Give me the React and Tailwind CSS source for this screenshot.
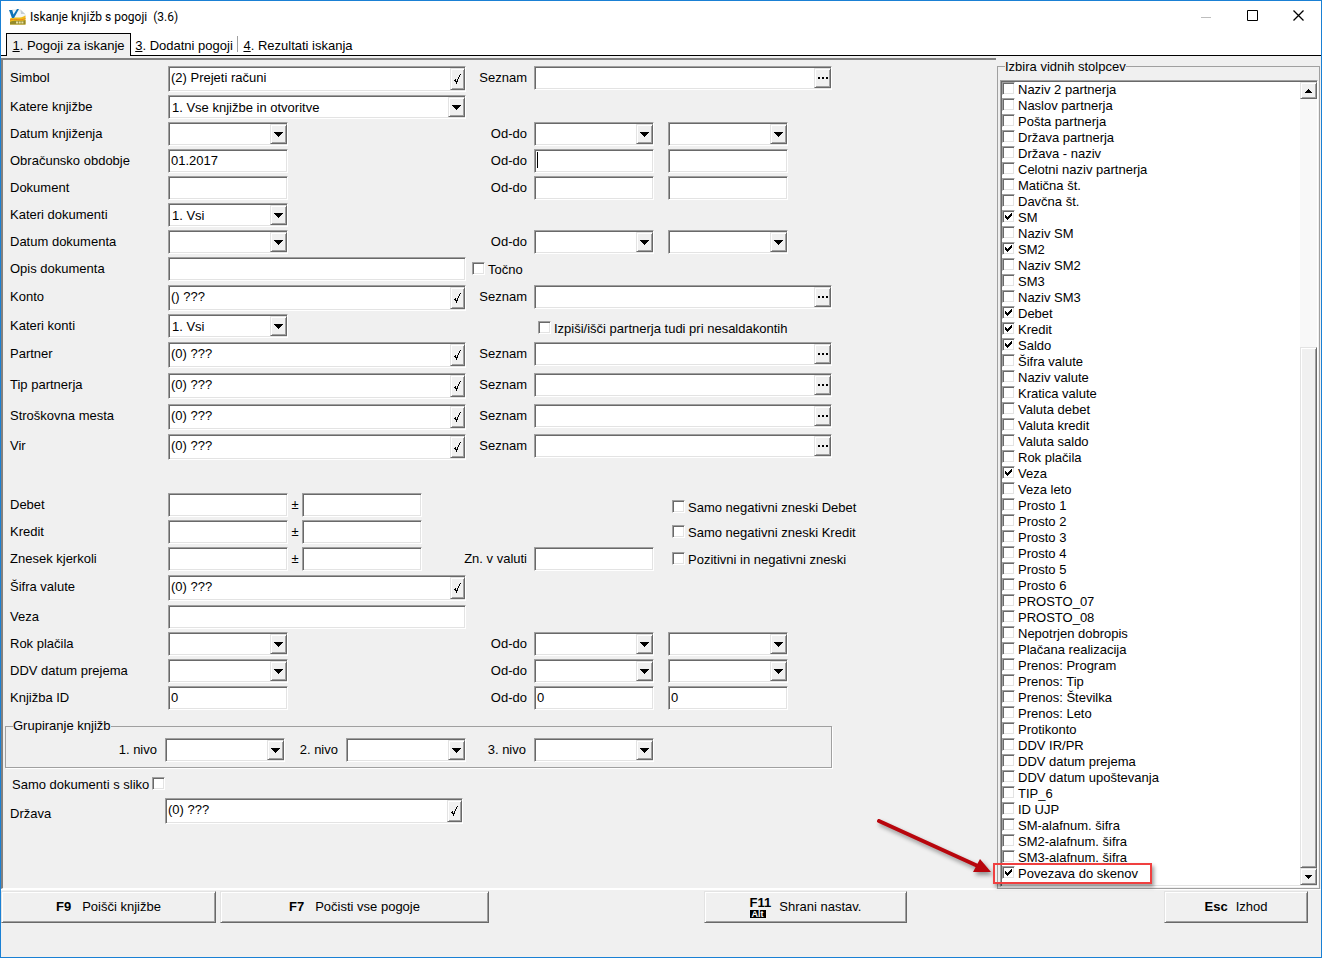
import { useState } from "react";

const bevelIn =
  "border border-t-[#a0a0a0] border-l-[#a0a0a0] border-b-white border-r-white shadow-[inset_1px_1px_0_#696969,inset_-1px_-1px_0_#e3e3e3]";
const bevelOut =
  "border border-t-[#e3e3e3] border-l-[#e3e3e3] border-b-[#696969] border-r-[#696969] bg-[#f0f0f0] shadow-[inset_1px_1px_0_#fff,inset_-1px_-1px_0_#a0a0a0]";

const columns = [
  "Naziv 2 partnerja",
  "Naslov partnerja",
  "Pošta partnerja",
  "Država partnerja",
  "Država - naziv",
  "Celotni naziv partnerja",
  "Matična št.",
  "Davčna št.",
  "SM",
  "Naziv SM",
  "SM2",
  "Naziv SM2",
  "SM3",
  "Naziv SM3",
  "Debet",
  "Kredit",
  "Saldo",
  "Šifra valute",
  "Naziv valute",
  "Kratica valute",
  "Valuta debet",
  "Valuta kredit",
  "Valuta saldo",
  "Rok plačila",
  "Veza",
  "Veza leto",
  "Prosto 1",
  "Prosto 2",
  "Prosto 3",
  "Prosto 4",
  "Prosto 5",
  "Prosto 6",
  "PROSTO_07",
  "PROSTO_08",
  "Nepotrjen dobropis",
  "Plačana realizacija",
  "Prenos: Program",
  "Prenos: Tip",
  "Prenos: Številka",
  "Prenos: Leto",
  "Protikonto",
  "DDV IR/PR",
  "DDV datum prejema",
  "DDV datum upoštevanja",
  "TIP_6",
  "ID UJP",
  "SM-alafnum. šifra",
  "SM2-alafnum. šifra",
  "SM3-alafnum. šifra",
  "Povezava do skenov",
];

const initiallyVisible = ["SM", "SM2", "Debet", "Kredit", "Saldo", "Veza", "Povezava do skenov"];

function Arrow() {
  return (
    <svg width="9" height="5" viewBox="0 0 9 5" shapeRendering="crispEdges">
      <path d="M0 0h9L4.5 5z" />
    </svg>
  );
}

function ScrollArrow({ up = false }) {
  return (
    <svg width="7" height="4" viewBox="0 0 7 4" shapeRendering="crispEdges">
      <path d={up ? "M0 4V3h1V2h1V1h1V0h1v1h1v1h1v1h1v1z" : "M0 0v1h1v1h1v1h1v1h1V3h1V2h1V1h1V0z"} />
    </svg>
  );
}

function TextField({ label, value = "", className = "w-[120px]", autoFocus = false }) {
  return (
    <div className={`${className} relative h-6 shrink-0`}>
      <input
        type="text"
        aria-label={label}
        defaultValue={value}
        autoFocus={autoFocus}
        className={`${bevelIn} block h-full w-full bg-white px-[2px] pb-[2px] outline-none ${autoFocus ? "caret-transparent" : ""}`}
      />
      {autoFocus && <span className="pointer-events-none absolute top-[3px] left-[3px] h-4 w-px bg-black" />}
    </div>
  );
}

function Combo({ label, value = "", className = "w-[120px]" }) {
  return (
    <div className={`${bevelIn} ${className} relative h-6 shrink-0 bg-white`}>
      <select
        aria-label={label}
        defaultValue={value}
        className="block h-full w-full appearance-none bg-transparent pt-px pl-[3px] outline-none"
      >
        <option>{value}</option>
      </select>
      <span
        className={`${bevelOut} pointer-events-none absolute top-px right-0 bottom-px flex w-[17px] items-center justify-center`}
      >
        <Arrow />
      </span>
    </div>
  );
}

function Lookup({ label, value }) {
  return (
    <div className={`${bevelIn} flex h-[26px] w-[298px] shrink-0 bg-white py-px pl-px`}>
      <input
        type="text"
        aria-label={label}
        defaultValue={value}
        className="min-w-0 flex-1 bg-transparent pb-[2px] pl-px outline-none"
      />
      <button
        type="button"
        aria-label={`${label} - izberi`}
        className={`${bevelOut} flex w-[15px] items-center justify-center`}
      >
        <svg width="7" height="10" viewBox="0 0 7 10" shapeRendering="crispEdges">
          <path d="M6 0h1v1H6zM5 1h1v2H5zM4 3h1v2H4zM3 5h1v3H3zM2 7h1v3H2zM1 5h1v3H1zM0 6h1v1H0z" />
        </svg>
      </button>
    </div>
  );
}

function ListField({ label }) {
  return (
    <div className={`${bevelIn} flex h-6 w-[298px] shrink-0 bg-white py-px pl-px`}>
      <input type="text" aria-label={label} className="min-w-0 flex-1 bg-transparent pl-px outline-none" />
      <button
        type="button"
        aria-label={`${label} - seznam`}
        className={`${bevelOut} flex w-[17px] items-center justify-center`}
      >
        <svg width="10" height="2" viewBox="0 0 10 2" shapeRendering="crispEdges">
          <path d="M0 0h2v2H0zM4 0h2v2H4zM8 0h2v2H8z" />
        </svg>
      </button>
    </div>
  );
}

function Check({ label, before = false, checked = false, onChange, className = "h-6" }) {
  const text = <span>{label}</span>;
  return (
    <label className={`flex items-center gap-[3px] whitespace-nowrap ${className}`}>
      {before && text}
      <span className="relative -mt-[3px] flex shrink-0">
        <input
          type="checkbox"
          {...(onChange ? { checked, onChange } : { defaultChecked: checked })}
          className={`${bevelIn} peer size-[13px] appearance-none bg-white`}
        />
        <svg
          className="pointer-events-none absolute inset-0 hidden peer-checked:block"
          width="13"
          height="13"
          viewBox="0 0 13 13"
          shapeRendering="crispEdges"
        >
          <path d="M3 5h1v1h1v1h1V6h1V5h1V4h1V3h1v3H9v1H8v1H7v1H6v1H5V9H4V8H3z" />
        </svg>
      </span>
      {!before && text}
    </label>
  );
}

function Row({ label, height = "h-[27px]", field, sideLabel, children }) {
  return (
    <div className={`grid grid-cols-[158px_298px_61px_1fr] ${height}`}>
      <span className="pt-1 whitespace-nowrap">{label}</span>
      <div className="flex">{field}</div>
      <span className="flex justify-end pt-1 whitespace-nowrap">{sideLabel}</span>
      <div className="flex gap-[14px] pl-[7px]">{children}</div>
    </div>
  );
}

function DateRange({ label }) {
  return (
    <>
      <Combo label={`${label} od`} />
      <Combo label={`${label} do`} />
    </>
  );
}

function TextRange({ label, value, autoFocus }) {
  return (
    <>
      <TextField label={`${label} od`} value={value} autoFocus={autoFocus} />
      <TextField label={`${label} do`} value={value} />
    </>
  );
}

function Tolerance({ label }) {
  return (
    <>
      <TextField label={label} />
      <span className="w-[14px] pt-1 text-center">±</span>
      <TextField label={`${label} ±`} />
    </>
  );
}

function AppLogo() {
  return (
    <svg width="17" height="16" viewBox="0 0 17 16">
      <path d="M3 1h9l4 4v6H3z" fill="#f3f6f8" stroke="#d5dce0" strokeWidth=".6" />
      <path d="M11.500 1L16 5h-4z" fill="#c5cdd2" />
      <path d="M1 9.500C6 7 10 10.500 16.500 6.500V15.500H1z" fill="#f0bd1c" />
      <path d="M1 11c5-2 9 1.500 15.500-1.500" fill="none" stroke="#e8791e" strokeWidth=".8" />
      <path d="M1 13c5-2.500 9 0 15.500-2v4.500H1z" fill="#938a2c" />
      <path d="M0 1h3.200l1.300 4.500L8 0h2L5 9H3z" fill="#1273b8" />
      <path d="M7 13.500h8" stroke="#e9e2a8" strokeWidth="2" strokeDasharray="2 .7" />
    </svg>
  );
}

function TitleBar() {
  return (
    <header className="flex h-8 items-center bg-white pl-2 font-[Roboto,sans-serif] text-[12px]">
      <AppLogo />
      <h1 className="ml-1 flex-1 whitespace-pre">Iskanje knjižb s pogoji  (3.6)</h1>
      <button type="button" aria-label="Pomanjšaj" className="flex w-[46px] justify-center">
        <svg width="10" height="10" viewBox="0 0 10 10" stroke="#bdbdbd">
          <path d="M0 5.500h10" />
        </svg>
      </button>
      <button type="button" aria-label="Povečaj" className="-mt-1 flex w-[46px] justify-center">
        <svg width="11" height="11" viewBox="0 0 11 11" fill="none" stroke="#000">
          <path d="M.5.5h10v10H.5z" />
        </svg>
      </button>
      <button type="button" aria-label="Zapri" className="-mt-1 flex w-[46px] justify-center">
        <svg width="11" height="11" viewBox="0 0 11 11" stroke="#000" strokeWidth="1.300">
          <path d="M.5.5l10 10M10.500.5l-10 10" />
        </svg>
      </button>
    </header>
  );
}

function Tabs() {
  return (
    <nav role="tablist" className="flex h-[23px] shrink-0 border-b border-black bg-white pl-[5px]">
      <button
        type="button"
        role="tab"
        aria-selected="true"
        className="-mb-px w-[125px] border border-b-0 border-black bg-[#f0f0f0] pt-px whitespace-nowrap"
      >
        <u>1</u>. Pogoji za iskanje
      </button>
      <button type="button" role="tab" aria-selected="false" className="w-[106px] pt-[3px] whitespace-nowrap">
        <u>3</u>. Dodatni pogoji
      </button>
      <span className="my-[3px] w-px bg-[#a0a0a0]" />
      <button type="button" role="tab" aria-selected="false" className="w-[120px] pt-[3px] whitespace-nowrap">
        <u>4</u>. Rezultati iskanja
      </button>
    </nav>
  );
}

function ConditionsForm() {
  return (
    <form className="min-w-0 flex-1 border-t-2 border-b border-l-2 border-[#808080] border-b-white pt-[6px] pl-[7px]">
      <Row
        label="Simbol"
        height="h-[29px]"
        field={<Lookup label="Simbol" value="(2) Prejeti računi" />}
        sideLabel="Seznam"
      >
        <ListField label="Simbol" />
      </Row>
      <Row
        label="Katere knjižbe"
        field={<Combo label="Katere knjižbe" value="1. Vse knjižbe in otvoritve" className="w-[298px]" />}
      />
      <Row label="Datum knjiženja" field={<Combo label="Datum knjiženja" />} sideLabel="Od-do">
        <DateRange label="Datum knjiženja" />
      </Row>
      <Row
        label="Obračunsko obdobje"
        field={<TextField label="Obračunsko obdobje" value="01.2017" />}
        sideLabel="Od-do"
      >
        <TextRange label="Obračunsko obdobje" autoFocus />
      </Row>
      <Row label="Dokument" field={<TextField label="Dokument" />} sideLabel="Od-do">
        <TextRange label="Dokument" />
      </Row>
      <Row label="Kateri dokumenti" field={<Combo label="Kateri dokumenti" value="1. Vsi" />} />
      <Row label="Datum dokumenta" field={<Combo label="Datum dokumenta" />} sideLabel="Od-do">
        <DateRange label="Datum dokumenta" />
      </Row>
      <div className="flex h-7">
        <span className="w-[158px] pt-1">Opis dokumenta</span>
        <TextField label="Opis dokumenta" className="w-[298px]" />
        <Check label="Točno" className="ml-[6px] h-[26px]" />
      </div>
      <Row label="Konto" height="h-[29px]" field={<Lookup label="Konto" value="() ???" />} sideLabel="Seznam">
        <ListField label="Konto" />
      </Row>
      <Row label="Kateri konti" height="h-7" field={<Combo label="Kateri konti" value="1. Vsi" />}>
        <Check label="Izpiši/išči partnerja tudi pri nesaldakontih" className="ml-1 h-[30px]" />
      </Row>
      <Row label="Partner" height="h-[31px]" field={<Lookup label="Partner" value="(0) ???" />} sideLabel="Seznam">
        <ListField label="Partner" />
      </Row>
      <Row
        label="Tip partnerja"
        height="h-[31px]"
        field={<Lookup label="Tip partnerja" value="(0) ???" />}
        sideLabel="Seznam"
      >
        <ListField label="Tip partnerja" />
      </Row>
      <Row
        label="Stroškovna mesta"
        height="h-[30px]"
        field={<Lookup label="Stroškovna mesta" value="(0) ???" />}
        sideLabel="Seznam"
      >
        <ListField label="Stroškovna mesta" />
      </Row>
      <Row label="Vir" height="h-[59px]" field={<Lookup label="Vir" value="(0) ???" />} sideLabel="Seznam">
        <ListField label="Vir" />
      </Row>

      <Row label="Debet" field={<Tolerance label="Debet" />}>
        <Check label="Samo negativni zneski Debet" className="ml-[138px] h-[30px]" />
      </Row>
      <Row label="Kredit" field={<Tolerance label="Kredit" />}>
        <Check label="Samo negativni zneski Kredit" className="ml-[138px] h-[26px]" />
      </Row>
      <Row label="Znesek kjerkoli" height="h-7" field={<Tolerance label="Znesek kjerkoli" />} sideLabel="Zn. v valuti">
        <TextField label="Zn. v valuti" />
        <Check label="Pozitivni in negativni zneski" className="ml-1 h-[26px]" />
      </Row>
      <Row label="Šifra valute" height="h-[30px]" field={<Lookup label="Šifra valute" value="(0) ???" />} />
      <Row label="Veza" field={<TextField label="Veza" className="w-[298px]" />} />
      <Row label="Rok plačila" field={<Combo label="Rok plačila" />} sideLabel="Od-do">
        <DateRange label="Rok plačila" />
      </Row>
      <Row label="DDV datum prejema" field={<Combo label="DDV datum prejema" />} sideLabel="Od-do">
        <DateRange label="DDV datum prejema" />
      </Row>
      <Row label="Knjižba ID" height="h-8" field={<TextField label="Knjižba ID" value="0" />} sideLabel="Od-do">
        <TextRange label="Knjižba ID" value="0" />
      </Row>

      <fieldset className="-ml-[5px] h-[50px] w-[827px] border border-[#a0a0a0] pl-[7px] shadow-[1px_1px_0_#fff]">
        <legend className="h-4 leading-4">Grupiranje knjižb</legend>
        <div className="flex pt-1">
          <span className="w-[144px] pt-1 text-right">1. nivo</span>
          <Combo label="1. nivo" className="ml-2 w-[120px]" />
          <span className="w-[53px] pt-1 text-right">2. nivo</span>
          <Combo label="2. nivo" className="ml-2 w-[120px]" />
          <span className="w-[60px] pt-1 text-right">3. nivo</span>
          <Combo label="3. nivo" className="ml-2 w-[120px]" />
        </div>
      </fieldset>

      <div className="flex h-[30px] pt-2 pl-[2px]">
        <Check label="Samo dokumenti s sliko" before className="h-[18px]" />
      </div>
      <div className="flex">
        <span className="w-[155px] pt-2">Država</span>
        <Lookup label="Država" value="(0) ???" />
      </div>
    </form>
  );
}

function ScrollBar() {
  return (
    <div className="flex w-[17px] flex-col bg-[#f8f8f8]">
      <button type="button" aria-label="Navzgor" className={`${bevelOut} flex h-[17px] items-center justify-center`}>
        <ScrollArrow up />
      </button>
      <div className="flex-[249]" />
      <div className={`${bevelOut} flex-[521]`} />
      <button type="button" aria-label="Navzdol" className={`${bevelOut} flex h-[17px] items-center justify-center`}>
        <ScrollArrow />
      </button>
    </div>
  );
}

function Callout() {
  return (
    <>
      <svg
        className="pointer-events-none absolute -top-[53px] -left-[128px] drop-shadow-[2px_3px_2px_rgba(0,0,0,0.4)]"
        width="122"
        height="66"
        viewBox="0 0 122 66"
      >
        <path d="M5 8L106 54" stroke="#b8060d" strokeWidth="4" strokeLinecap="round" />
        <path d="M117 59L99 59 106 46z" fill="#b8060d" />
      </svg>
      <span className="pointer-events-none absolute -top-[3px] -left-[9px] h-[21px] w-[159px] border-2 border-[#f04040] shadow-[2px_3px_4px_rgba(0,0,0,0.4)]" />
    </>
  );
}

function ColumnPicker() {
  const [visible, setVisible] = useState(initiallyVisible);

  const toggle = (name) =>
    setVisible((prev) => (prev.includes(name) ? prev.filter((n) => n !== name) : [...prev, name]));

  return (
    <fieldset className="mr-px ml-px flex w-[323px] shrink-0 flex-col border border-[#a0a0a0] pr-px pb-px pl-[2px]">
      <legend className="ml-[5px] h-4 leading-[18px]">Izbira vidnih stolpcev</legend>
      <div className={`${bevelIn} mt-[6px] flex bg-white py-px pl-px`}>
        <ul className="flex-1 pb-[3px]">
          {columns.map((name) => (
            <li key={name} className="relative h-4 leading-4">
              <Check label={name} checked={visible.includes(name)} onChange={() => toggle(name)} className="h-4" />
              {name === "Povezava do skenov" && <Callout />}
            </li>
          ))}
        </ul>
        <ScrollBar />
      </div>
    </fieldset>
  );
}

function ActionButton({ shortcut, alt = false, label, className }) {
  return (
    <button type="button" className={`${bevelOut} ${className} flex h-8 items-center justify-center`}>
      <span className="flex flex-col items-start">
        <b className="leading-[14px]">{shortcut}</b>
        {alt && <span className="bg-black px-[2px] text-[9px] leading-[8px] font-bold text-white">Alt</span>}
      </span>
      {label}
    </button>
  );
}

export default function App() {
  return (
    <div className="flex min-h-screen flex-col border border-[#1a80d4] bg-[#f0f0f0] font-['Liberation_Sans',Arial,sans-serif] text-[13px] leading-4 text-black">
      <TitleBar />
      <Tabs />
      <main className="flex pt-[2px]">
        <ConditionsForm />
        <ColumnPicker />
      </main>
      <footer className="flex border-t border-white pt-px">
        <ActionButton shortcut="F9" label="Poišči knjižbe" className="w-[215px] gap-[11px]" />
        <ActionButton shortcut="F7" label="Počisti vse pogoje" className="ml-1 w-[269px] gap-[11px]" />
        <ActionButton shortcut="F11" alt label="Shrani nastav." className="ml-[215px] w-[203px] gap-2" />
        <ActionButton shortcut="Esc" label="Izhod" className="mr-[13px] ml-auto w-[144px] gap-2" />
      </footer>
    </div>
  );
}
